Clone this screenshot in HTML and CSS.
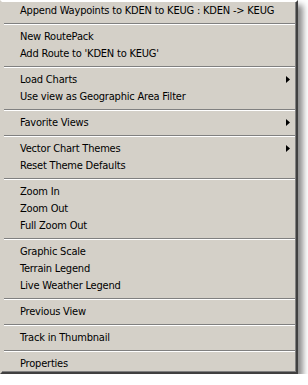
FILE: index.html
```html
<!DOCTYPE html>
<html>
<head>
  <title>Chart Menu</title>
  <link rel="stylesheet" href="styles.css">
</head>
<body>
  <div class="menu">
    <div class="menu-item">Append Waypoints to KDEN to KEUG : KDEN -&gt; KEUG</div>
    <div class="menu-sep"></div>
    <div class="menu-item">New RoutePack</div>
    <div class="menu-item">Add Route to 'KDEN to KEUG'</div>
    <div class="menu-sep"></div>
    <div class="menu-item">Load Charts
      <svg class="sub-arrow" width="4" height="7" viewBox="0 0 4 7"><polygon points="0,0 4,3.5 0,7" fill="#000"/></svg>
    </div>
    <div class="menu-item">Use view as Geographic Area Filter</div>
    <div class="menu-sep"></div>
    <div class="menu-item">Favorite Views
      <svg class="sub-arrow" width="4" height="7" viewBox="0 0 4 7"><polygon points="0,0 4,3.5 0,7" fill="#000"/></svg>
    </div>
    <div class="menu-sep"></div>
    <div class="menu-item">Vector Chart Themes
      <svg class="sub-arrow" width="4" height="7" viewBox="0 0 4 7"><polygon points="0,0 4,3.5 0,7" fill="#000"/></svg>
    </div>
    <div class="menu-item">Reset Theme Defaults</div>
    <div class="menu-sep"></div>
    <div class="menu-item">Zoom In</div>
    <div class="menu-item">Zoom Out</div>
    <div class="menu-item">Full Zoom Out</div>
    <div class="menu-sep"></div>
    <div class="menu-item">Graphic Scale</div>
    <div class="menu-item">Terrain Legend</div>
    <div class="menu-item">Live Weather Legend</div>
    <div class="menu-sep"></div>
    <div class="menu-item">Previous View</div>
    <div class="menu-sep"></div>
    <div class="menu-item">Track in Thumbnail</div>
    <div class="menu-sep"></div>
    <div class="menu-item">Properties</div>
  </div>
</body>
</html>
```
FILE: styles.css
```css
body {
  margin: 0;
  background-color: #fff;
  font-family: "DejaVu Sans Condensed", "DejaVu Sans", sans-serif;
  font-stretch: condensed;
  font-size: 11px;
  letter-spacing: -0.2px;
  color: #000;
}
.menu {
  width: 294px;
  background-color: #d4d0c8;
  border-style: solid;
  border-width: 2px;
  border-color: #fff #404040 #404040 #d4d0c8;
  box-shadow: inset -1px -1px 0 #808080, 5px 5px 6px rgba(0, 0, 0, 0.45);
  display: flex;
  flex-direction: column;
}
.menu-item {
  height: 17px;
  line-height: 17px;
  padding-left: 18px;
  padding-right: 6px;
  display: flex;
  align-items: center;
  justify-content: space-between;
  white-space: nowrap;
}
.sub-arrow {
  display: block;
}
.menu-sep {
  height: 9px;
  display: flex;
  flex-direction: column;
  justify-content: center;
  margin: 0 1px 0 2px;
}
.menu-sep:before {
  content: "";
  display: block;
  height: 1px;
  background-color: #808080;
  border-bottom: 1px solid #fff;
}
```
